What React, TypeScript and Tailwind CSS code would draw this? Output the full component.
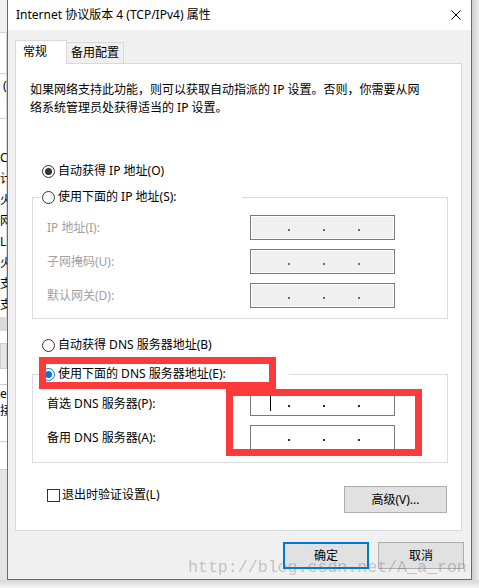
import React from 'react';

const font = "font-['Noto_Sans','Noto_Sans_CJK_SC',sans-serif]";

function Radio({ checked, blue }: { checked?: boolean; blue?: boolean }) {
    return (
        <span
            className={`flex h-[13px] w-[13px] shrink-0 items-center justify-center rounded-full border bg-white ${
                blue ? 'border-[#0078d7]' : 'border-[#333333]'
            }`}
        >
            {checked && (
                <span className={`h-[7px] w-[7px] rounded-full ${blue ? 'bg-[#0078d7]' : 'bg-[#333333]'}`} />
            )}
        </span>
    );
}

function IpBox({ disabled, caret }: { disabled?: boolean; caret?: boolean }) {
    return (
        <div
            className={`relative h-[25px] w-[145px] border border-[#7a7a7a] ${
                disabled ? 'bg-[#f0f0f0] shadow-[inset_0_0_0_1px_#ffffff]' : 'bg-white'
            }`}
        >
            <div className="flex gap-[33px] pl-[37px] pt-[13px]">
                {[0, 1, 2].map((i) => (
                    <span
                        key={i}
                        className={`h-[2px] w-[2px] ${disabled ? 'bg-[#6a6a78]' : 'bg-[#2a2a3a]'}`}
                    />
                ))}
            </div>
            {caret && <span className="absolute left-[19px] top-[4px] h-[15px] w-px bg-black" />}
        </div>
    );
}

function FieldRow({ label, disabled, caret }: { label: string; disabled?: boolean; caret?: boolean }) {
    return (
        <div className="flex h-[25px] items-center">
            <span className={`w-[203px] ${disabled ? 'text-[#a0a0a0]' : 'text-black'}`}>{label}</span>
            <IpBox disabled={disabled} caret={caret} />
        </div>
    );
}

const sideRows = ['C', '计', '火', '网', 'L口', '火', '支', '支'];

export default function App() {
    return (
        <div className={`relative flex h-[588px] w-[479px] flex-col overflow-hidden bg-[#f0f0f0] text-[12px] leading-[18px] text-black ${font}`}>
            <div className="flex h-[580px]">
                {/* window behind the dialog */}
                <div className="flex w-[7px] flex-col overflow-hidden bg-white">
                    <div className="h-[33px] shrink-0 border-b border-[#d0d0d0] bg-[#f2f2f2]" />
                    <div className="h-[41px] shrink-0 border-b border-[#d0d0d0] border-r" />
                    <div className="h-[45px] shrink-0 whitespace-nowrap border-b border-r border-[#d0d0d0] pl-[3px] pt-[3px]">(C</div>
                    <div className="flex shrink-0 flex-col whitespace-nowrap border-r border-[#d9d9d9] pt-[30px]">
                        {sideRows.map((t, i) => (
                            <div key={i} className="h-[21px] whitespace-nowrap pl-0">
                                {t}
                            </div>
                        ))}
                    </div>
                    <div className="h-[14px] shrink-0 bg-[#dadada]" />
                    <div className="h-[12px] shrink-0" />
                    <div className="h-[26px] shrink-0 border border-[#cfcfcf] bg-[#e6e6e6]" />
                    <div className="h-[16px] shrink-0 border-b border-[#d0d0d0]" />
                    <div className="h-[17px] shrink-0 whitespace-nowrap">er</div>
                    <div className="h-[18px] shrink-0 whitespace-nowrap">接</div>
                    <div className="h-[22px] shrink-0 border-b border-[#d0d0d0]" />
                    <div className="h-[28px] shrink-0 border-b border-[#d0d0d0]" />
                    <div className="flex-1 bg-[#e4e4e4]" />
                </div>

                {/* dialog */}
                <div className="flex w-[465px] flex-col border-x border-b border-[#1a7dd7] bg-[#f0f0f0]">
                    <div className="flex h-[30px] items-center justify-between bg-white pl-[8px] pr-[10px]">
                        <span>Internet 协议版本 4 (TCP/IPv4) 属性</span>
                        <svg width="10" height="10" viewBox="0 0 10 10">
                            <path d="M0.5 0.5 L9.5 9.5 M9.5 0.5 L0.5 9.5" stroke="#000" strokeWidth="1" />
                        </svg>
                    </div>

                    <div className="flex flex-col pl-[7px] pr-[9px] pt-[10px]">
                        <div className="flex items-end">
                            <div className="relative z-10 -mb-px h-[24px] w-[52px] border-l border-r border-t border-[#d9d9d9] bg-white pl-[7px] pt-[2px]">
                                常规
                            </div>
                            <div className="h-[21px] w-[57px] border-r border-t border-[#d9d9d9] bg-[#f0f0f0] pl-[4px] pt-px">
                                备用配置
                            </div>
                        </div>

                        <div className="flex h-[468px] flex-col border border-[#d9d9d9] bg-white">
                            <p className="ml-[14px] mt-[17px]">
                                如果网络支持此功能，则可以获取自动指派的 IP 设置。否则，你需要从网
                                <br />
                                络系统管理员处获得适当的 IP 设置。
                            </p>

                            <div className="ml-[26px] mt-[45px] flex h-[18px] items-center gap-[3px]">
                                <Radio checked />
                                <span>自动获得 IP 地址(O)</span>
                            </div>

                            <div className="relative ml-[16px] mt-[17px] h-[122px] w-[416px] border border-[#dcdcdc] pl-[14px] pt-[17px]">
                                <div className="absolute left-[8px] top-[-10px] flex h-[18px] w-[201px] items-center gap-[3px] bg-white pl-px">
                                    <Radio />
                                    <span>使用下面的 IP 地址(S):</span>
                                </div>
                                <div className="flex flex-col gap-[9px]">
                                    <FieldRow label="IP 地址(I):" disabled />
                                    <FieldRow label="子网掩码(U):" disabled />
                                    <FieldRow label="默认网关(D):" disabled />
                                </div>
                            </div>

                            <div className="ml-[26px] mt-[17px] flex h-[18px] items-center gap-[3px]">
                                <Radio />
                                <span>自动获得 DNS 服务器地址(B)</span>
                            </div>

                            <div className="relative ml-[16px] mt-[20px] h-[89px] w-[416px] border border-[#dcdcdc] pl-[14px] pt-[16px]">
                                <div className="absolute left-[8px] top-[-10px] flex h-[18px] w-[248px] items-center gap-[3px] bg-white pl-px">
                                    <Radio checked blue />
                                    <span>使用下面的 DNS 服务器地址(E):</span>
                                </div>
                                <div className="flex flex-col gap-[9px]">
                                    <FieldRow label="首选 DNS 服务器(P):" caret />
                                    <FieldRow label="备用 DNS 服务器(A):" />
                                </div>
                            </div>

                            <div className="ml-[31px] mr-[14px] mt-[23px] flex items-start justify-between">
                                <div className="flex h-[18px] items-center gap-[2px]">
                                    <span className="h-[13px] w-[13px] border border-[#333333] bg-white" />
                                    <span>退出时验证设置(L)</span>
                                </div>
                                <button className="flex h-[27px] w-[103px] items-center justify-center border border-[#adadad] bg-[#e1e1e1]">
                                    高级(V)...
                                </button>
                            </div>
                        </div>
                    </div>

                    <div className="mt-[11px] flex justify-end gap-[9px] pr-[7px]">
                        <button className="flex h-[27px] w-[86px] items-center justify-center border-2 border-[#0078d7] bg-[#e1e1e1]">
                            确定
                        </button>
                        <button className="flex h-[27px] w-[86px] items-center justify-center border border-[#adadad] bg-[#e1e1e1]">
                            取消
                        </button>
                    </div>
                </div>

                <div className="w-[7px] bg-gradient-to-r from-[#cfcfcf] to-[#ececec]" />
            </div>
            <div className="h-[8px] bg-gradient-to-b from-[#d6d6d6] to-[#f5f5f5]" />

            {/* annotation boxes */}
            <div className="absolute left-[39px] top-[357px] h-[32px] w-[237px] border-[7px] border-[#fc3a3a]" />
            <div className="absolute left-[226px] top-[389px] h-[67px] w-[196px] border-[7px] border-[#fc3a3a]" />

            {/* watermark */}
            <div className="absolute left-[188px] top-[558px] font-['Liberation_Mono',monospace] text-[16.6px] leading-[20px] text-[rgba(120,120,120,0.4)]">
                http://blog.csdn.net/A_a_ron
            </div>
        </div>
    );
}
